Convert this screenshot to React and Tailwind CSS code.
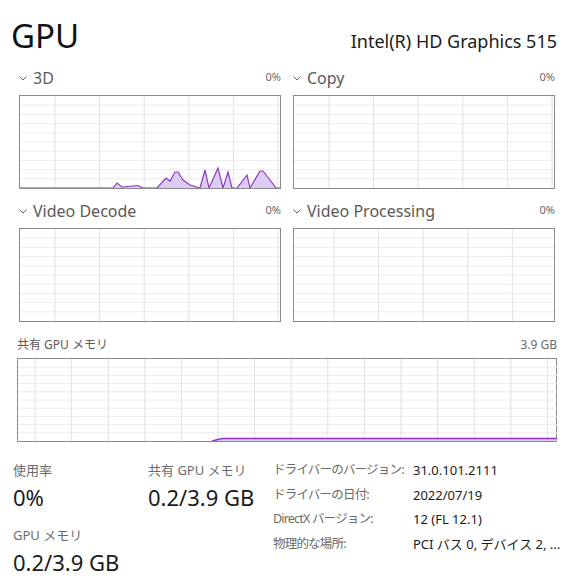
import React from 'react';

const FONT = "font-['Noto_Sans','Noto_Sans_CJK_JP',sans-serif]";

// inner coords of the 3D chart (260 x 92)
const threeD = [
    [0, 92], [93, 92], [97, 87], [102, 91], [113, 90], [118, 89.5], [123, 92],
    [137, 92], [146, 82], [150, 85], [155, 76], [158, 76], [163, 84], [170, 89], [180, 92],
    [185, 74], [189, 92], [198, 72], [203, 92], [208, 76], [212, 92], [217, 92],
    [227, 79], [230, 92], [240, 75], [243, 75], [250, 84], [256, 92], [260, 92],
];

const Grid = ({ w, h, rows, step, offset }) => {
    const lines = [];
    for (let i = 1; i < rows; i++) {
        const y = (h / rows) * i;
        lines.push(<line key={'h' + i} x1="0" x2={w} y1={y} y2={y} stroke="#ececec" strokeWidth="1" />);
    }
    for (let x = offset; x < w; x += step) {
        lines.push(<line key={'v' + x} x1={x} x2={x} y1="0" y2={h} stroke="#e2e2e2" strokeWidth="1" />);
    }
    return lines;
};

const Chevron = () => (
    <svg width="8" height="5" viewBox="0 0 8 5" className="mr-[6px] mb-[5px] shrink-0">
        <path d="M0.5 0.5 L4 4 L7.5 0.5" fill="none" stroke="#6a6a6a" strokeWidth="1" />
    </svg>
);

const EngineChart = ({ label, offset = 35, data }) => (
    <div className="flex flex-col">
        <div className="flex items-baseline justify-between h-[16px]">
            <div className="flex items-end">
                <Chevron />
                <span className="text-[16px] leading-[16px] text-[#5a5a5a]">{label}</span>
            </div>
            <span className="text-[11px] leading-[16px] text-[#6b6b6b]">0%</span>
        </div>
        <div className="mt-[10px] h-[94px] border border-[#8a8a8a] bg-white">
            <svg width="260" height="92" viewBox="0 0 260 92" className="block">
                <Grid w={260} h={92} rows={10} step={44.6} offset={offset} />
                {data && (
                    <>
                        <polygon points={data.map((p) => p.join(',')).join(' ')} fill="#dccbf2" />
                        <polyline points={data.map((p) => p.join(',')).join(' ')} fill="none" stroke="#8d3bc2" strokeWidth="1.2" />
                    </>
                )}
            </svg>
        </div>
    </div>
);

const Stat = ({ label, value }) => (
    <div className="flex flex-col">
        <span className="text-[13px] leading-[16px] text-[#6b6b6b] whitespace-nowrap">{label}</span>
        <span className="mt-[7px] text-[22px] leading-[24px] text-[#1a1a1a] whitespace-nowrap">{value}</span>
    </div>
);

const info = [
    ['ドライバーのバージョン:', '31.0.101.2111'],
    ['ドライバーの日付:', '2022/07/19'],
    ['DirectX バージョン:', '12 (FL 12.1)'],
    ['物理的な場所:', 'PCI バス 0, デバイス 2, ...'],
];

export default function App() {
    return (
        <div className={`w-[580px] h-[585px] bg-white overflow-hidden ${FONT}`}>
            {/* Header */}
            <div className="flex items-end justify-between h-[52px] pl-[11px] pr-[23px]">
                <h1 className="text-[33px] leading-[33px] text-[#111]">GPU</h1>
                <span className="mb-[1px] text-[18px] leading-[19px] text-[#1a1a1a]">Intel(R) HD Graphics 515</span>
            </div>

            {/* Engines */}
            <div className="grid grid-cols-[262px_262px] gap-x-[12px] gap-y-[13px] pt-[17px] pl-[19px]">
                <EngineChart label="3D" data={threeD} />
                <EngineChart label="Copy" />
                <EngineChart label="Video Decode" />
                <EngineChart label="Video Processing" offset={40} />
            </div>

            {/* Shared memory */}
            <div className="mt-[17px] pl-[17px] pr-[23px]">
                <div className="flex justify-between text-[12px] leading-[12px] text-[#5a5a5a]">
                    <span>共有 GPU メモリ</span>
                    <span className="text-[#6b6b6b]">3.9 GB</span>
                </div>
                <div className="mt-[7px] h-[84px] border border-[#8a8a8a]">
                    <svg width="539" height="82" viewBox="0 0 539 82" className="block">
                        <Grid w={539} h={82} rows={10} step={36.6} offset={17} />
                        <polygon points="194,82 204,79.5 539,79.5 539,82" fill="#dccbf2" />
                        <polyline points="194,82 204,79.5 539,79.5" fill="none" stroke="#8d3bc2" strokeWidth="1.5" />
                    </svg>
                </div>
            </div>

            {/* Stats */}
            <div className="flex pl-[13px]">
                <div className="w-[135px] pt-[20px] flex flex-col">
                    <Stat label="使用率" value="0%" />
                    <div className="mt-[18px]">
                        <Stat label="GPU メモリ" value="0.2/3.9 GB" />
                    </div>
                </div>
                <div className="w-[125px] pt-[20px]">
                    <Stat label="共有 GPU メモリ" value="0.2/3.9 GB" />
                </div>
                <div className="pt-[16px] grid grid-cols-[140px_auto] auto-rows-[24.5px] text-[13px] leading-[24.5px] whitespace-nowrap">
                    {info.map(([k, v]) => (
                        <React.Fragment key={k}>
                            <span className="h-[24.5px] overflow-visible text-[#6b6b6b] text-[12.5px] tracking-[-0.8px]">{k}</span>
                            <span className="h-[24.5px] overflow-visible text-[#1a1a1a]">{v}</span>
                        </React.Fragment>
                    ))}
                </div>
            </div>
        </div>
    );
}
